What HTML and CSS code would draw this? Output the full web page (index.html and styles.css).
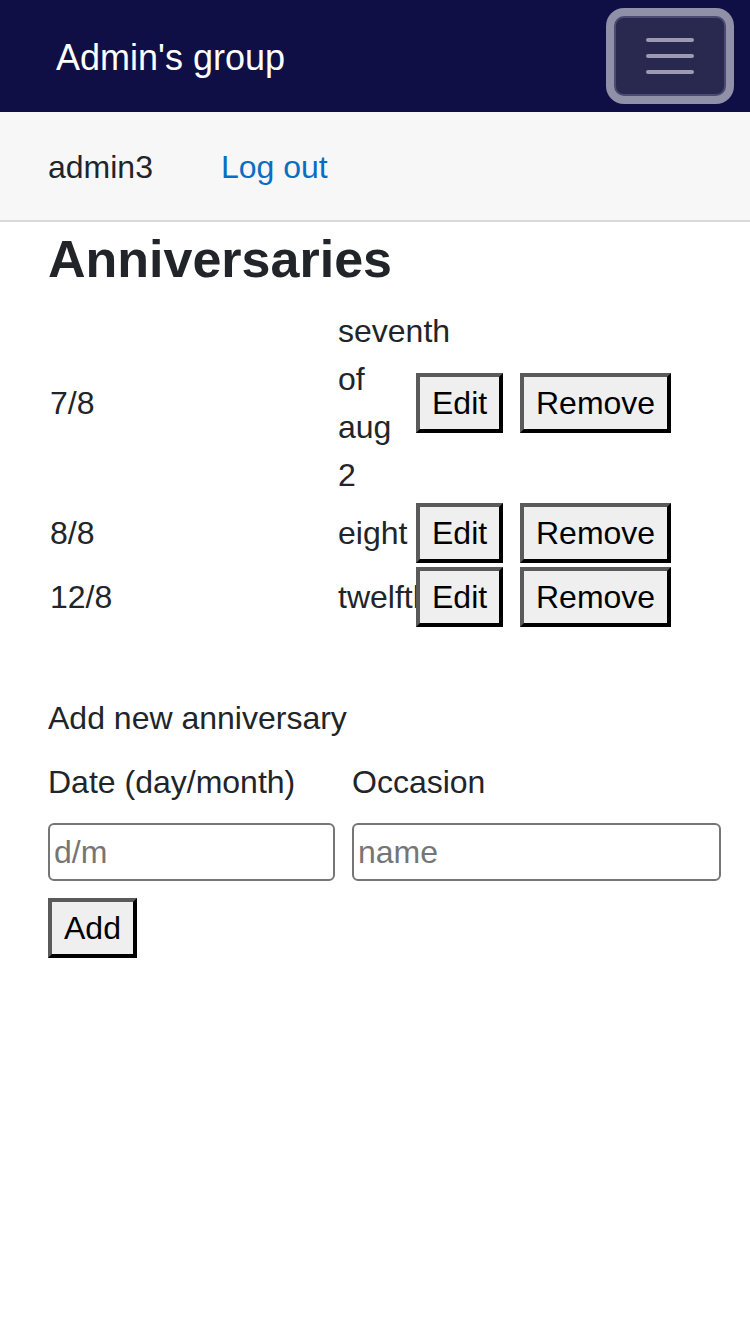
FILE: index.html
```html
<!DOCTYPE html>
<html lang="en">
<head>
<meta charset="utf-8">
<title>Anniversaries</title>
<link rel="stylesheet" href="styles.css">
</head>
<body>
<header class="navbar">
  <span class="brand">Admin's group</span>
  <button class="toggler" type="button" aria-label="Toggle navigation">
    <svg class="toggler-icon" width="60" height="48" viewBox="0 0 60 48">
      <path d="M8 8H52M8 24H52M8 40H52" stroke="#9b9bb3" stroke-width="4" stroke-linecap="round" fill="none"/>
    </svg>
  </button>
</header>
<nav class="userbar">
  <span class="user">admin3</span>
  <a class="logout" href="#">Log out</a>
</nav>
<main class="content">
  <h1 class="title">Anniversaries</h1>
  <table class="list">
    <colgroup>
      <col class="c-date"><col class="c-name"><col class="c-edit"><col class="c-remove">
    </colgroup>
    <tbody>
      <tr>
        <td>7/8</td>
        <td><span class="word">seventh</span> <span class="word">of</span> <span class="word">aug</span> <span class="word">2</span></td>
        <td><button class="btn" type="button">Edit</button></td>
        <td><button class="btn" type="button">Remove</button></td>
      </tr>
      <tr>
        <td>8/8</td>
        <td>eight</td>
        <td><button class="btn" type="button">Edit</button></td>
        <td><button class="btn" type="button">Remove</button></td>
      </tr>
      <tr>
        <td>12/8</td>
        <td>twelfth</td>
        <td><button class="btn" type="button">Edit</button></td>
        <td><button class="btn" type="button">Remove</button></td>
      </tr>
    </tbody>
  </table>
  <form class="add-form">
    <p class="add-title">Add new anniversary</p>
    <div class="fields">
      <label class="lbl" for="date">Date (day/month)</label>
      <label class="lbl" for="occ">Occasion</label>
      <input class="inp" id="date" type="text" placeholder="d/m">
      <input class="inp" id="occ" type="text" placeholder="name">
    </div>
    <button class="btn add" type="button">Add</button>
  </form>
</main>
</body>
</html>
```
FILE: styles.css
```css
* { box-sizing: border-box; }

body {
  margin: 0;
  font-family: "Liberation Sans", Arial, Helvetica, sans-serif;
  font-size: 32px;
  line-height: 48px;
  color: #212529;
  background: #ffffff;
}

.navbar {
  height: 112px;
  background: #0f0f45;
  display: flex;
  align-items: center;
  padding: 0 24px 0 56px;
}

.brand {
  color: #ffffff;
  font-size: 36px;
  line-height: 54px;
  padding-top: 3px;
}

.toggler {
  margin-left: auto;
  width: 112px;
  height: 80px;
  background: #29294f;
  border: 2px solid #4a4a72;
  border-radius: 10px;
  box-shadow: 0 0 0 8px #9091a9;
  display: flex;
  align-items: center;
  justify-content: center;
  padding: 0;
}

.toggler-icon { display: block; }

.userbar {
  background: #f7f7f7;
  border-bottom: 2px solid #d9d9d9;
  height: 110px;
  padding: 31px 0 0 48px;
  display: flex;
  gap: 68px;
}

.user { color: #212529; }

.logout {
  color: #0a6ec0;
  text-decoration: none;
}

.content {
  padding: 0 0 0 48px;
}

.title {
  margin: 6px 0 15px;
  font-size: 52px;
  line-height: 62px;
  font-weight: 700;
  color: #212529;
}

.list {
  table-layout: fixed;
  border-collapse: collapse;
  width: 623px;
}

.c-date { width: 288px; }
.c-name { width: 78px; }
.c-edit { width: 104px; }
.c-remove { width: 153px; }

.list td {
  padding: 2px;
  vertical-align: middle;
  text-align: left;
}

.word { display: block; }

.btn {
  font-family: "Liberation Sans", Arial, Helvetica, sans-serif;
  font-size: 32px;
  line-height: 48px;
  color: #000000;
  background: #efefef;
  padding: 2px 12px;
  border-width: 4px;
  border-style: solid;
  border-color: #5a5a5a #000000 #000000 #5a5a5a;
  border-radius: 0;
  display: inline-block;
  vertical-align: middle;
}

.add-form {
  margin-top: 65px;
}

.add-title {
  margin: 0 0 16px;
}

.fields {
  display: grid;
  grid-template-columns: 287px 369px;
  column-gap: 17px;
  row-gap: 17px;
}

.lbl { display: block; }

.inp {
  height: 58px;
  border: 2px solid #767676;
  border-radius: 6px;
  padding: 2px 4px;
  font-family: "Liberation Sans", Arial, Helvetica, sans-serif;
  font-size: 32px;
  color: #212529;
  background: #ffffff;
}

.inp::placeholder { color: #757575; }

.add {
  margin-top: 17px;
}
```
